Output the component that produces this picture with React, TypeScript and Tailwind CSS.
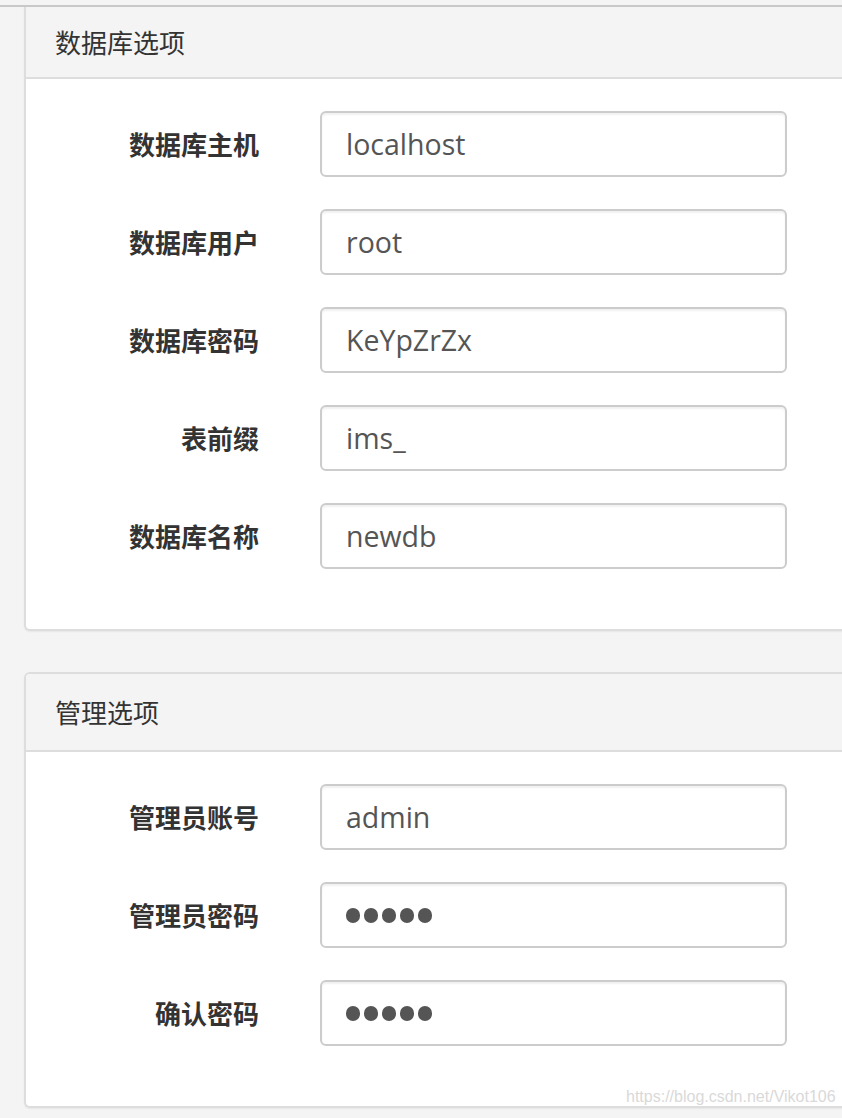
import React from "react";

const cjk = { fontFamily: '"Microsoft YaHei", "Noto Sans CJK SC", "Noto Sans", sans-serif' };
const latin = { fontFamily: '"Open Sans", "Noto Sans CJK SC", sans-serif' };

function Field({ label, value, password }: { label: string; value: string; password?: boolean }) {
  return (
    <div className="flex items-center h-[66px]">
      <div
        className="w-[233px] shrink-0 text-right text-[26px] font-bold text-[#333] leading-none"
        style={cjk}
      >
        {label}
      </div>
      <div className="ml-[61px] w-[467px] h-[66px] rounded-[6px] border-2 border-[#cccccc] bg-white shadow-[inset_0_2px_2px_rgba(0,0,0,0.06)] flex items-center pl-[24px]">
        {password ? (
          <div className="flex gap-[4px] items-center">
            {[0, 1, 2, 3, 4].map((i) => (
              <span key={i} className="block w-[14px] h-[15px] rounded-full bg-[#555]" />
            ))}
          </div>
        ) : (
          <span className="text-[28.5px] text-[#555] leading-none" style={latin}>
            {value}
          </span>
        )}
      </div>
    </div>
  );
}

function Panel({
  title,
  headerH,
  bodyPt,
  fields,
  extraTop,
}: {
  title: string;
  headerH: string;
  bodyPt: string;
  fields: { label: string; value: string; password?: boolean }[];
  extraTop?: boolean;
}) {
  return (
    <div
      className={`w-[840px] bg-white border-l-2 border-b-2 border-[#dddddd] rounded-bl-[6px] shadow-[0_1px_2px_rgba(0,0,0,0.06)] ${
        extraTop ? "border-t-2 rounded-tl-[6px]" : ""
      }`}
    >
      <div
        className={`${headerH} bg-[#f4f4f4] border-b-2 border-[#dddddd] flex items-center pl-[29px] ${
          extraTop ? "rounded-tl-[4px]" : ""
        }`}
      >
        <span className="text-[26px] text-[#333] leading-none" style={cjk}>
          {title}
        </span>
      </div>
      <div className={`flex flex-col gap-[32px] ${bodyPt} pb-[60px]`}>
        {fields.map((f) => (
          <Field key={f.label} {...f} />
        ))}
      </div>
    </div>
  );
}

export default function App() {
  return (
    <div className="relative w-[842px] h-[1118px] overflow-hidden bg-[#f4f4f4]">
      <div className="h-[5px]" />
      <div className="h-[2px] bg-[#c8c8c8]" />
      <div className="pl-[24px] flex flex-col gap-[41px]">
        <Panel
          title="数据库选项"
          headerH="h-[72px]"
          bodyPt="pt-[32px]"
          fields={[
            { label: "数据库主机", value: "localhost" },
            { label: "数据库用户", value: "root" },
            { label: "数据库密码", value: "KeYpZrZx" },
            { label: "表前缀", value: "ims_" },
            { label: "数据库名称", value: "newdb" },
          ]}
        />
        <Panel
          title="管理选项"
          headerH="h-[78px]"
          bodyPt="pt-[32px]"
          extraTop
          fields={[
            { label: "管理员账号", value: "admin" },
            { label: "管理员密码", value: "", password: true },
            { label: "确认密码", value: "", password: true },
          ]}
        />
      </div>
      <div
        className="absolute left-[626px] top-[1089px] text-[16px] text-[#d9d9d9] leading-none"
        style={{ fontFamily: '"Liberation Sans", Arial, sans-serif' }}
      >
        https://blog.csdn.net/Vikot106
      </div>
    </div>
  );
}
